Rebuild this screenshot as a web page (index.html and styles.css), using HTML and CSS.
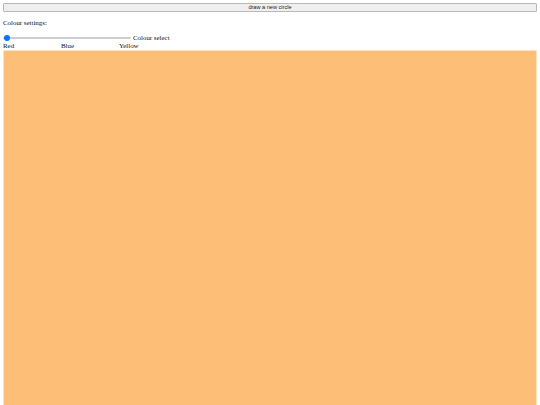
FILE: index.html
```html
<!DOCTYPE html>
<html lang="en">
<head>
  <meta charset="UTF-8">
  <title>Circles</title>
  <link rel="stylesheet" href="styles.css">
</head>
<body>
  <button type="button" class="draw-btn">draw a new circle</button>
  <p class="settings">Colour settings:</p>
  <div class="slider-row">
    <input type="range" id="colour" class="colour-range" min="0" max="2" value="0">
    <label for="colour">Colour select</label>
  </div>
  <div class="labels">
    <span class="lbl">Red</span>
    <span class="lbl">Blue</span>
    <span class="lbl">Yellow</span>
  </div>
  <div class="canvas"></div>
</body>
</html>
```

FILE: styles.css
```css
html, body {
  height: 100%;
}
body {
  margin: 0;
  padding: 3px 3px 0 3px;
  box-sizing: border-box;
  display: flex;
  flex-direction: column;
  font-family: 'Liberation Serif', 'Times New Roman', serif;
  font-size: 6.9px;
  color: #111;
  background: #fff;
  overflow: hidden;
}
.draw-btn {
  display: block;
  width: 100%;
  height: 9px;
  padding: 0;
  font-family: 'Liberation Sans', Arial, sans-serif;
  font-size: 5.6px;
  line-height: 7px;
  color: #222;
  background: #efefef;
  border: 1px solid #b8b8b8;
  border-radius: 1px;
}
.settings {
  margin: 7px 0;
  line-height: 7.6px;
}
.slider-row {
  display: flex;
  align-items: center;
  height: 8px;
}
.colour-range {
  -webkit-appearance: none;
  appearance: none;
  width: 128px;
  height: 6px;
  margin: 0 2px 0 0;
  background: transparent;
}
.colour-range::-webkit-slider-runnable-track {
  height: 2px;
  background: #ececec;
  border: 0.5px solid #cdcdcd;
  border-radius: 2px;
}
.colour-range::-webkit-slider-thumb {
  -webkit-appearance: none;
  width: 6px;
  height: 6px;
  margin-top: -2.5px;
  border-radius: 50%;
  background: #0075ff;
  border: none;
}
.labels {
  display: flex;
  line-height: 7px;
}
.lbl {
  width: 58px;
}
.canvas {
  flex: 1 0 auto;
  margin-top: 1px;
  margin-bottom: -2px;
  background: #fdbf78;
  border: 1px solid #fde3c4;
}
```
